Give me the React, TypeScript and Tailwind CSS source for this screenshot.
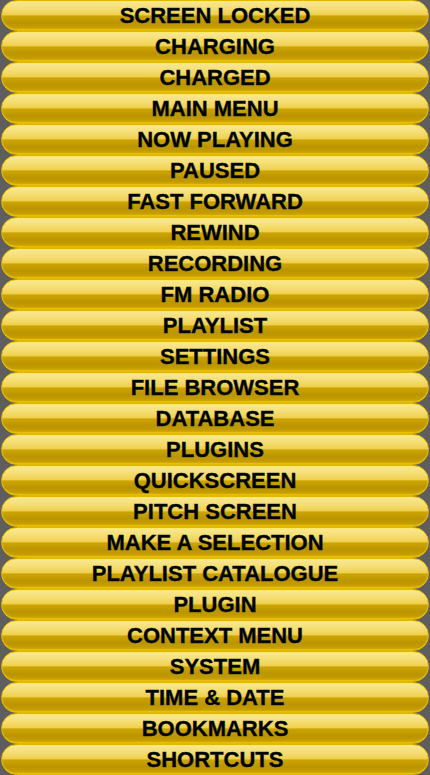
const items = [
  'SCREEN LOCKED',
  'CHARGING',
  'CHARGED',
  'MAIN MENU',
  'NOW PLAYING',
  'PAUSED',
  'FAST FORWARD',
  'REWIND',
  'RECORDING',
  'FM RADIO',
  'PLAYLIST',
  'SETTINGS',
  'FILE BROWSER',
  'DATABASE',
  'PLUGINS',
  'QUICKSCREEN',
  'PITCH SCREEN',
  'MAKE A SELECTION',
  'PLAYLIST CATALOGUE',
  'PLUGIN',
  'CONTEXT MENU',
  'SYSTEM',
  'TIME & DATE',
  'BOOKMARKS',
  'SHORTCUTS',
]

export default function App() {
  return (
    <div className="w-[430px] h-[775px] bg-[#5e5e5e] flex flex-col overflow-hidden">
      {items.map((label) => (
        <div
          key={label}
          className="h-[31px] shrink-0 mx-px rounded-full border border-[#e2b800] bg-[linear-gradient(to_bottom,#f9e996_0%,#f5de74_25%,#efd050_47%,#cca400_52%,#bb9500_75%,#c49c00_90%,#dcb400_100%)] shadow-[inset_0_1px_0_#ffe86a,inset_0_-1px_0_#e8c000] flex items-center justify-center"
        >
          <span className="font-['Liberation_Sans',Arial,sans-serif] font-bold text-[22px] leading-none text-black [-webkit-text-stroke:0.4px_#0a1a14]">
            {label}
          </span>
        </div>
      ))}
    </div>
  )
}
